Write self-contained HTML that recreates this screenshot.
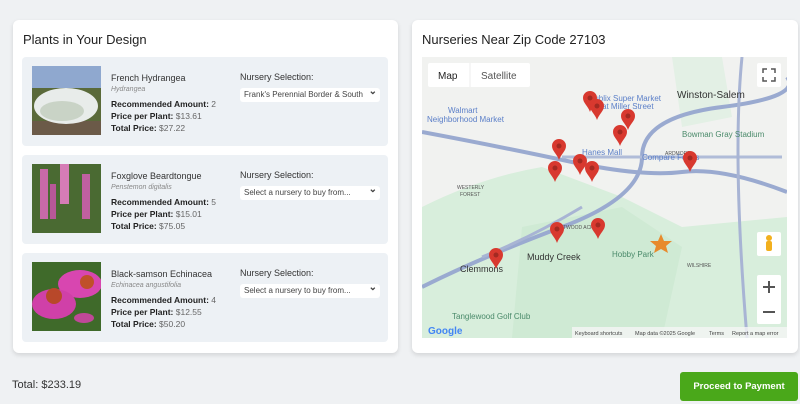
<!DOCTYPE html>
<html><head><meta charset="utf-8"><style>
*{box-sizing:border-box;margin:0;padding:0}
body{width:800px;height:404px;background:#eff1f3;font-family:"Liberation Sans",sans-serif;color:#333;position:relative;overflow:hidden}
.card{position:absolute;top:20px;height:333px;background:#fff;border-radius:6px;box-shadow:0 2px 5px rgba(0,0,0,.12)}
.card h2{position:absolute;left:10px;top:12px;font-size:13px;font-weight:normal;color:#222}
.row{position:absolute;left:9px;width:366px;height:89px;background:#edf1f5;border-radius:4px}
.row .img{position:absolute;left:10px;top:9px;width:69px;height:69px}
.info{position:absolute;left:89px;top:15px;font-size:8.5px;line-height:12px}
.info .n{font-size:9px}
.info .s{font-style:italic;color:#888;font-size:7px;line-height:11px;margin-bottom:3px}
.info b{color:#222}
.info span{color:#666}
.ns{position:absolute;left:218px;top:15px;font-size:9px}
.sel{position:absolute;left:218px;top:31px;width:140px;height:14px;background:#fff;border-radius:3px;font-size:8px;color:#444;padding:2px 4px;white-space:nowrap;overflow:hidden}
.sel:after{content:"⌄";position:absolute;right:3px;top:-2px;font-size:10px;font-weight:bold}
</style></head><body>
<div class="card" style="left:13px;width:385px">
<h2>Plants in Your Design</h2>
<div class="row" style="top:37px">
<svg class="img" viewBox="0 0 69 69"><rect width="69" height="25" fill="#8fa8cf"/><rect y="22" width="69" height="47" fill="#5a6a3a"/><rect y="55" width="69" height="14" fill="#6b5a48"/><ellipse cx="34" cy="40" rx="32" ry="18" fill="#e8ecea"/><ellipse cx="30" cy="45" rx="22" ry="10" fill="#c9d3c6"/></svg>
<div class="info"><div class="n">French Hydrangea</div><div class="s">Hydrangea</div><b>Recommended Amount:</b> <span>2</span><br><b>Price per Plant:</b> <span>$13.61</span><br><b>Total Price:</b> <span>$27.22</span></div>
<div class="ns">Nursery Selection:</div><div class="sel">Frank's Perennial Border &amp; South</div>
</div>
<div class="row" style="top:135px">
<svg class="img" viewBox="0 0 69 69"><rect width="69" height="69" fill="#4a6a32"/><rect x="8" y="5" width="8" height="50" fill="#c86aa8"/><rect x="28" y="0" width="9" height="40" fill="#d67cb6"/><rect x="50" y="10" width="8" height="45" fill="#c060a0"/><rect x="18" y="20" width="6" height="35" fill="#b85898"/></svg>
<div class="info"><div class="n">Foxglove Beardtongue</div><div class="s">Penstemon digitalis</div><b>Recommended Amount:</b> <span>5</span><br><b>Price per Plant:</b> <span>$15.01</span><br><b>Total Price:</b> <span>$75.05</span></div>
<div class="ns">Nursery Selection:</div><div class="sel">Select a nursery to buy from...</div>
</div>
<div class="row" style="top:233px">
<svg class="img" viewBox="0 0 69 69"><rect width="69" height="69" fill="#3f6a2a"/><ellipse cx="48" cy="22" rx="22" ry="14" fill="#d846b0"/><ellipse cx="22" cy="42" rx="22" ry="15" fill="#d040a8"/><circle cx="55" cy="20" r="7" fill="#c0502a"/><circle cx="22" cy="34" r="8" fill="#b8482a"/><ellipse cx="52" cy="56" rx="10" ry="5" fill="#c04898"/></svg>
<div class="info"><div class="n">Black-samson Echinacea</div><div class="s">Echinacea angustifolia</div><b>Recommended Amount:</b> <span>4</span><br><b>Price per Plant:</b> <span>$12.55</span><br><b>Total Price:</b> <span>$50.20</span></div>
<div class="ns">Nursery Selection:</div><div class="sel">Select a nursery to buy from...</div>
</div>
</div>
<div class="card" style="left:412px;width:386px">
<h2>Nurseries Near Zip Code 27103</h2>
<svg style="position:absolute;left:10px;top:37px" width="365" height="281" viewBox="0 0 365 281" font-family="Liberation Sans">
<defs><g id="p"><path d="M0 0 C-2 -6 -7 -9 -7 -14 A7 7 0 1 1 7 -14 C7 -9 2 -6 0 0Z" fill="#d8392f"/><circle cx="0" cy="-14" r="2.5" fill="#a32a22"/></g></defs>
<rect width="365" height="281" fill="#f1f2f0"/>
<path d="M0 150 Q60 120 120 110 L200 140 L260 170 L365 160 L365 281 L0 281Z" fill="#d8eedc"/>
<path d="M100 170 L200 150 L260 190 L240 281 L90 281Z" fill="#cfeAd4"/>
<path d="M250 0 L300 0 L310 60 L260 70Z" fill="#e3f0e5"/>
<path d="M0 75 Q80 90 150 105 T260 115 T365 135" stroke="#9aaad0" stroke-width="4" fill="none"/>
<path d="M0 230 Q60 200 140 170 T220 100 T300 50 T365 20" stroke="#9aaad0" stroke-width="4" fill="none"/>
<path d="M140 100 L360 100" stroke="#b0bcd8" stroke-width="3" fill="none"/>
<path d="M320 0 Q310 100 325 281" stroke="#a8b4d4" stroke-width="3" fill="none"/>
<path d="M60 200 Q110 180 160 150" stroke="#a8b4d4" stroke-width="3" fill="none"/>
<g font-size="9" fill="#333"><text x="255" y="41" font-size="10">Winston-Salem</text><text x="105" y="203">Muddy Creek</text><text x="38" y="215">Clemmons</text></g>
<g font-size="8" fill="#5b7fc8"><text x="26" y="56">Walmart</text><text x="5" y="65">Neighborhood Market</text><text x="167" y="44">Publix Super Market</text><text x="180" y="52">at Miller Street</text><text x="160" y="98">Hanes Mall</text><text x="220" y="103">Compare Foods</text></g>
<text x="260" y="80" font-size="8" fill="#4a8a6a">Bowman Gray Stadium</text>
<text x="190" y="200" font-size="8" fill="#4a8a6a">Hobby Park</text>
<text x="30" y="262" font-size="8" fill="#4a8a6a">Tanglewood Golf Club</text>
<g font-size="5" fill="#555"><text x="35" y="132">WESTERLY</text><text x="38" y="139">FOREST</text><text x="138" y="172">ATWOOD ACRES</text><text x="265" y="210">WILSHIRE</text><text x="243" y="98">ARDMORE</text></g>
<text x="6" y="277" font-size="10" font-weight="bold" fill="#4285f4">Google</text>
<rect x="150" y="270" width="215" height="11" fill="#f5f5f5" opacity=".8"/>
<g font-size="5.5" fill="#444"><text x="153" y="278">Keyboard shortcuts</text><text x="213" y="278">Map data ©2025 Google</text><text x="287" y="278">Terms</text><text x="310" y="278">Report a map error</text></g>
<use href="#p" x="168" y="55"/><use href="#p" x="175" y="63"/><use href="#p" x="206" y="73"/><use href="#p" x="198" y="89"/><use href="#p" x="137" y="103"/><use href="#p" x="133" y="125"/><use href="#p" x="158" y="118"/><use href="#p" x="170" y="125"/><use href="#p" x="268" y="115"/><use href="#p" x="74" y="212"/><use href="#p" x="135" y="186"/><use href="#p" x="176" y="182"/>
<polygon points="239,177 242,184 250,184 244,189 246,196 239,192 232,196 234,189 228,184 236,184" fill="#e88a2c"/>
<rect x="6" y="6" width="102" height="24" fill="#fff" rx="2"/><text x="16" y="22" font-size="10" fill="#222">Map</text><line x1="48" y1="6" x2="48" y2="30" stroke="#eee"/><text x="59" y="22" font-size="10" fill="#555">Satellite</text>
<rect x="335" y="6" width="24" height="24" fill="#fff" rx="2"/><path d="M341 16v-4h4M349 12h4v4M353 20v4h-4M345 24h-4v-4" stroke="#555" stroke-width="1.5" fill="none"/>
<rect x="335" y="175" width="24" height="24" fill="#fff" rx="2"/><circle cx="347" cy="181" r="3" fill="#f2b01e"/><rect x="344" y="184" width="6" height="10" fill="#f2b01e" rx="2"/>
<rect x="335" y="218" width="24" height="49" fill="#fff" rx="2"/><path d="M341 230h12M347 224v12M341 255h12" stroke="#555" stroke-width="2"/>
</svg>
</div>
<div style="position:absolute;left:12px;top:379px;font-size:11px;color:#333">Total: $233.19</div>
<div style="position:absolute;left:680px;top:372px;width:118px;height:29px;background:#4aa81a;border-radius:3px;color:#fff;font-size:9.5px;font-weight:bold;text-align:center;line-height:29px">Proceed to Payment</div>
</body></html>
